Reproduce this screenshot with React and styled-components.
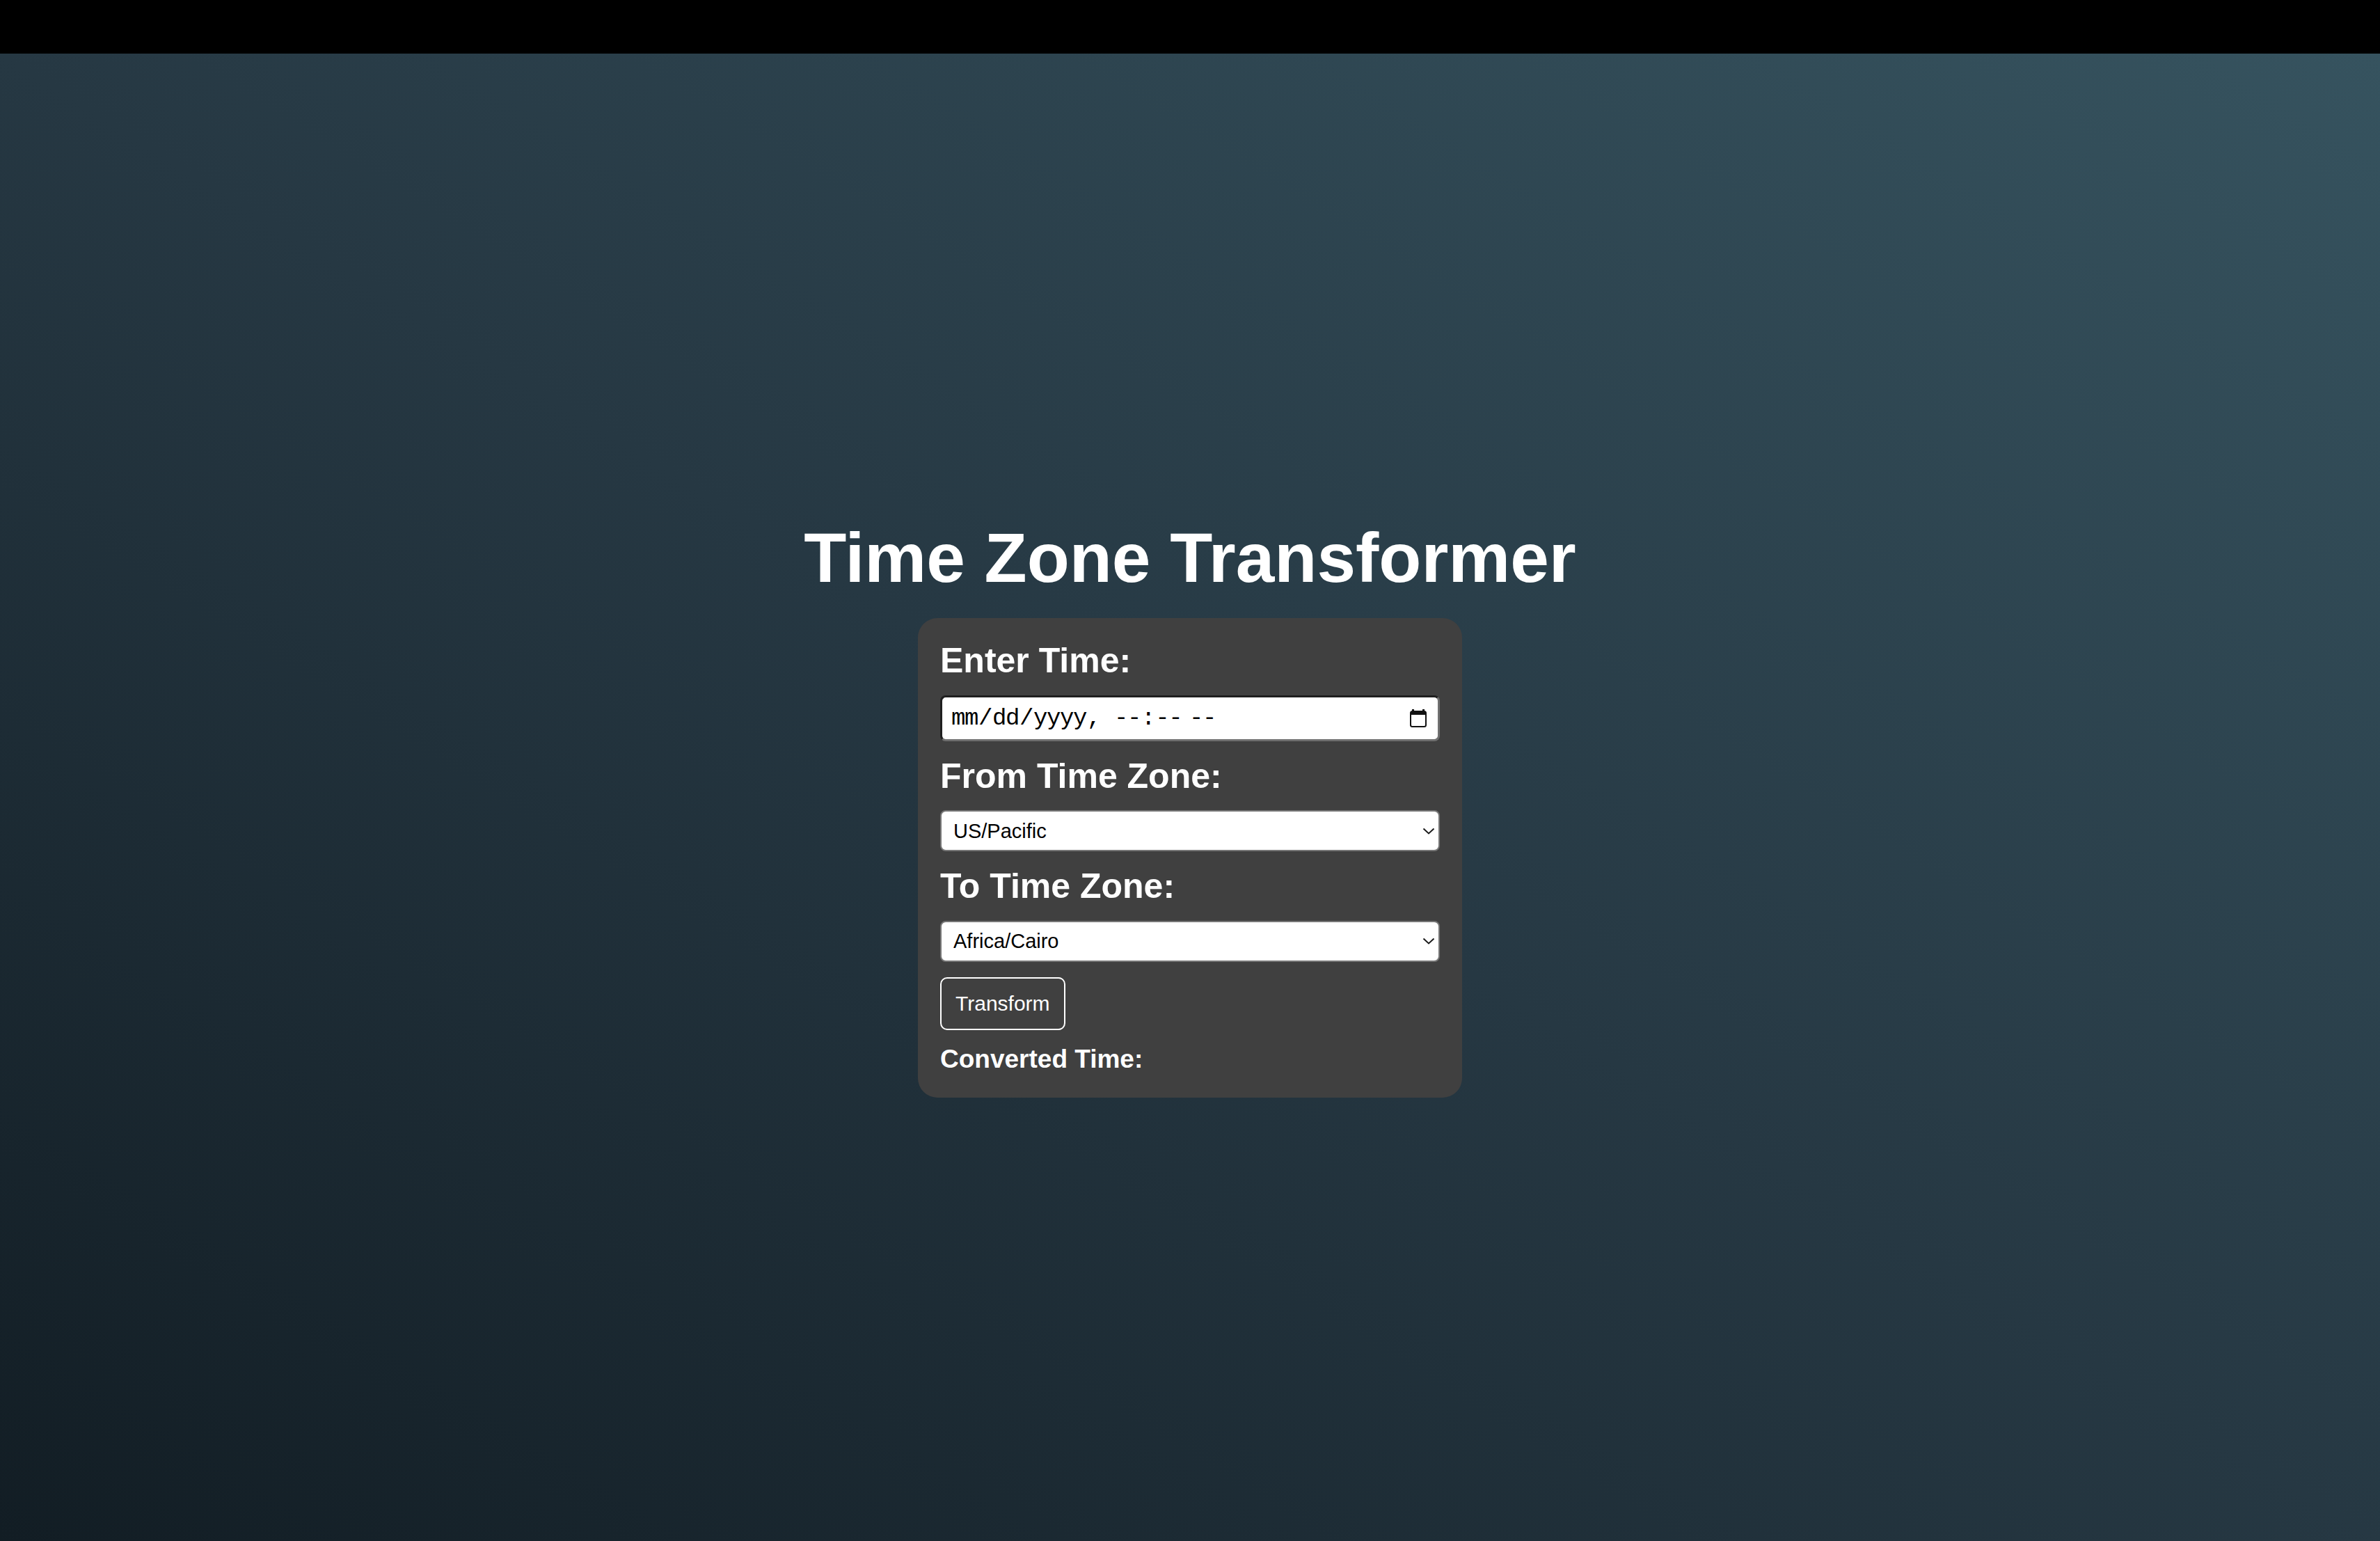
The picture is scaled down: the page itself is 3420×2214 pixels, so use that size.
import React, { useState } from "react";
import styled, { createGlobalStyle } from "styled-components";

const GlobalStyle = createGlobalStyle`
  html, body {
    margin: 0;
    padding: 0;
  }
  body {
    font-family: "Liberation Sans", Arial, sans-serif;
    background: #000;
  }
  *, *::before, *::after {
    box-sizing: border-box;
  }
`;

const Page = styled.div`
  min-height: 100vh;
  display: flex;
  flex-direction: column;
`;

const TopBar = styled.div`
  height: 77px;
  flex-shrink: 0;
  background: #000;
`;

const Main = styled.main`
  flex: 1;
  display: flex;
  flex-direction: column;
  align-items: center;
  justify-content: center;
  padding-top: 30px;
  background: linear-gradient(to top right, #121d24 0%, #263843 50%, #36535f 100%);
`;

const Title = styled.h1`
  margin: 0 0 29px;
  font-size: 100px;
  line-height: 1.15;
  font-weight: 700;
  color: #fff;
`;

const Card = styled.form`
  width: 782px;
  background: #404040;
  border-radius: 28px;
  padding: 33px 32px 34px;
  display: flex;
  flex-direction: column;
  gap: 22px;
`;

const Field = styled.div`
  display: flex;
  flex-direction: column;
  gap: 20px;
`;

const Label = styled.label`
  font-size: 50px;
  line-height: 1.15;
  font-weight: 700;
  color: #fff;
`;

const InputBox = styled.div`
  display: flex;
  align-items: center;
  height: 66px;
  background: #fff;
  border: 3px solid;
  border-color: #1f1f1f #707070 #707070 #1f1f1f;
  border-radius: 8px;
  padding: 0 16px 0 12px;
`;

const DateInput = styled.input`
  flex: 1;
  min-width: 0;
  height: 100%;
  border: none;
  outline: none;
  background: transparent;
  padding: 0;
  color: #000;
  font-family: "Liberation Mono", "DejaVu Sans Mono", monospace;
  font-size: 34px;
  letter-spacing: -1.4px;

  &::-webkit-calendar-picker-indicator {
    display: none;
  }
`;

const CalendarIcon = styled.svg`
  flex-shrink: 0;
  width: 24px;
  height: 26px;
`;

const SelectWrap = styled.div`
  position: relative;
`;

const Select = styled.select`
  width: 100%;
  height: 59px;
  appearance: none;
  -webkit-appearance: none;
  background: #fff;
  border: 2px solid #777;
  border-radius: 8px;
  padding: 0 40px 0 17px;
  font-family: "Liberation Sans", Arial, sans-serif;
  font-size: 29px;
  color: #000;
  outline: none;
`;

const Chevron = styled.svg`
  position: absolute;
  right: 7px;
  top: 50%;
  width: 18px;
  height: 10px;
  margin-top: -5px;
  pointer-events: none;
`;

const Button = styled.button`
  align-self: flex-start;
  padding: 19px 20px;
  border: 2px solid #fff;
  border-radius: 10px;
  background: transparent;
  color: #fff;
  font-family: "Liberation Sans", Arial, sans-serif;
  font-size: 30px;
  line-height: 1.15;
  cursor: pointer;
`;

const Result = styled.h3`
  margin: 0;
  font-size: 37px;
  line-height: 1.1;
  font-weight: 700;
  color: #fff;
`;

const zones = [
  "US/Pacific",
  "US/Mountain",
  "US/Central",
  "US/Eastern",
  "Europe/London",
  "Europe/Paris",
  "Africa/Cairo",
  "Asia/Tokyo",
  "Australia/Sydney",
];

function ZoneSelect({ id, value, onChange }) {
  return (
    <SelectWrap>
      <Select id={id} value={value} onChange={(e) => onChange(e.target.value)}>
        {zones.map((z) => (
          <option key={z} value={z}>
            {z}
          </option>
        ))}
      </Select>
      <Chevron viewBox="0 0 18 10" aria-hidden="true">
        <polyline points="1.5,1.5 9,8.5 16.5,1.5" fill="none" stroke="#1a1a1a" strokeWidth="2" />
      </Chevron>
    </SelectWrap>
  );
}

export default function App() {
  const [time, setTime] = useState("");
  const [from, setFrom] = useState("US/Pacific");
  const [to, setTo] = useState("Africa/Cairo");
  const [result, setResult] = useState("");

  const onSubmit = (e) => {
    e.preventDefault();
    setResult(time ? time : "");
  };

  return (
    <Page>
      <GlobalStyle />
      <TopBar />
      <Main>
        <Title>Time Zone Transformer</Title>
        <Card onSubmit={onSubmit}>
          <Field>
            <Label htmlFor="time">Enter Time:</Label>
            <InputBox>
              <DateInput
                id="time"
                type="datetime-local"
                value={time}
                onChange={(e) => setTime(e.target.value)}
              />
              <CalendarIcon viewBox="0 0 24 26" aria-hidden="true">
                <rect x="3" y="0" width="3" height="4" fill="#111" />
                <rect x="18" y="0" width="3" height="4" fill="#111" />
                <rect x="1" y="3" width="22" height="22" rx="2.5" fill="none" stroke="#111" strokeWidth="2" />
                <rect x="1" y="3" width="22" height="5" fill="#111" />
              </CalendarIcon>
            </InputBox>
          </Field>
          <Field>
            <Label htmlFor="from">From Time Zone:</Label>
            <ZoneSelect id="from" value={from} onChange={setFrom} />
          </Field>
          <Field>
            <Label htmlFor="to">To Time Zone:</Label>
            <ZoneSelect id="to" value={to} onChange={setTo} />
          </Field>
          <Button type="submit">Transform</Button>
          <Result>Converted Time: {result}</Result>
        </Card>
      </Main>
    </Page>
  );
}
